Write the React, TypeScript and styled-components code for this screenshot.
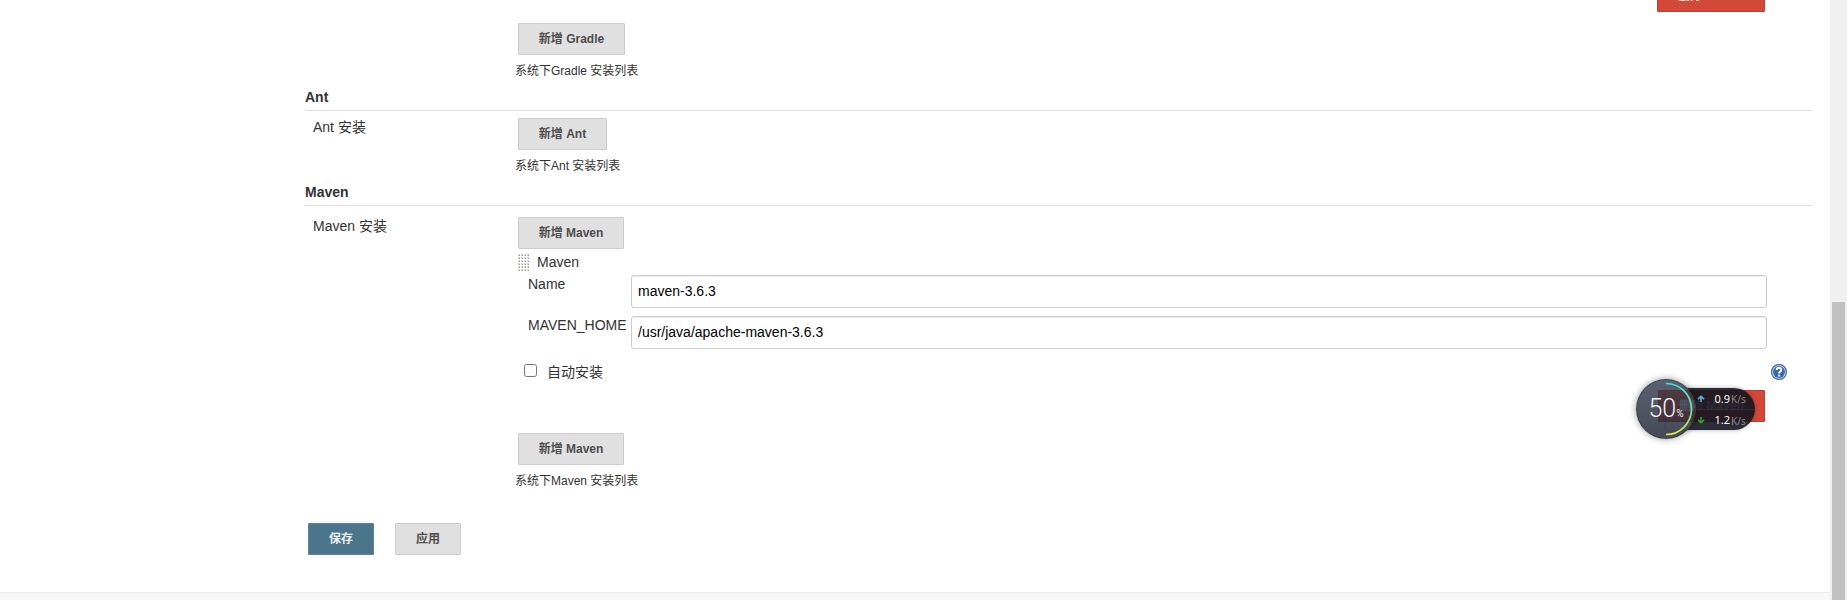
import React from "react";
import styled, { createGlobalStyle } from "styled-components";

const GlobalStyle = createGlobalStyle`
  * { box-sizing: border-box; }
  body {
    margin: 0;
    overflow: hidden;
    background: #fff;
    color: #333;
    font: 14px/20px "Liberation Sans", "Noto Sans CJK SC", sans-serif;
  }
`;

const Screen = styled.div`
  position: relative;
  display: flex;
  width: 1847px;
  height: 600px;
  overflow: hidden;
`;

const Page = styled.main`
  display: flex;
  flex-direction: column;
  width: 1830px;
  height: 600px;
`;

const Form = styled.form`
  display: flex;
  flex-direction: column;
  height: 592px;
  padding: 0 18px 0 305px;
`;

const Footer = styled.footer`
  height: 8px;
  border-top: 1px solid #e8eeee;
  background: #f7f7f7;
`;

const Track = styled.div`
  width: 17px;
  height: 600px;
  padding: 302px 2px 0;
  background: #f0f0f0;
`;

const Thumb = styled.div`
  height: 298px;
  background: #c1c1c1;
`;

const Section = styled.section<{ $height: number }>`
  display: flex;
  flex-direction: column;
  height: ${(p) => p.$height}px;
`;

const Heading = styled.h2`
  height: 24px;
  margin: 0;
  border-bottom: 1px solid #ddd;
  font-size: 14px;
  line-height: 20px;
  font-weight: bold;
`;

const Row = styled.div<{ $top?: number }>`
  display: flex;
  padding-top: ${(p) => p.$top ?? 0}px;
`;

const RowLabel = styled.div`
  width: 205px;
  margin-top: -1px;
  padding-left: 8px;
  line-height: 20px;
  white-space: nowrap;
`;

const Setting = styled.div`
  display: flex;
  flex-direction: column;
  align-items: flex-start;
  width: 1302px;
  padding-left: 8px;
`;

const Button = styled.button<{ $width: number; $tone?: "primary" | "danger" }>`
  flex: none;
  width: ${(p) => p.$width}px;
  height: 32px;
  padding: 0;
  border: 1px solid
    ${(p) => (p.$tone === "primary" ? "#5088a0" : p.$tone === "danger" ? "#c43c2c" : "#ccc")};
  border-radius: 1px;
  background: ${(p) =>
    p.$tone === "primary" ? "#4b758b" : p.$tone === "danger" ? "#d24939" : "#e0e0e0"};
  color: ${(p) => (p.$tone ? "#eee" : "#4d4d4d")};
  font: bold 12px/30px "Liberation Sans", "Noto Sans CJK SC", sans-serif;
  white-space: nowrap;
`;

const Hint = styled.div`
  height: 18px;
  margin: 7px 0 0 -3px;
  font-size: 12px;
  line-height: 18px;
  white-space: nowrap;
`;

const DeleteSlot = styled.div`
  display: flex;
  justify-content: flex-end;
  width: 1247px;
  height: 32px;
`;

const RemovedAbove = styled(DeleteSlot)`
  height: 12px;
  margin-bottom: 11px;
  align-items: flex-end;
`;

const ToolTitle = styled.div`
  display: flex;
  align-items: center;
  height: 26px;
  gap: 8px;
`;

const Grip = styled.svg`
  width: 11px;
  height: 17px;
  margin-top: 1px;
`;

const Field = styled.div`
  display: flex;
  height: 41px;
  padding-left: 10px;
`;

const FieldLabel = styled.label`
  width: 103px;
  line-height: 18px;
`;

const Input = styled.input`
  width: 1136px;
  height: 33px;
  padding: 0 6px 1px;
  border: 1px solid #ccc;
  border-radius: 3px;
  outline: 0;
  background: #fff;
  box-shadow: inset 0 1px 1px rgba(0, 0, 0, 0.075);
  color: #000;
  font: 14px/20px "Liberation Sans", sans-serif;
`;

const CheckRow = styled.div`
  display: flex;
  align-items: center;
  width: 1269px;
  height: 30px;
  margin-bottom: 3px;
  padding-left: 6px;
`;

const Checkbox = styled.input`
  width: 13px;
  height: 13px;
  margin: -3px 10px 0 0;
`;

const Help = styled.svg`
  width: 16px;
  height: 16px;
  margin-left: auto;
`;

const Actions = styled.div`
  display: flex;
  gap: 21px;
  padding: 0 3px;
`;

const Monitor = styled.div`
  position: absolute;
  left: 1636px;
  top: 379px;
  width: 119px;
  height: 60px;
`;

const Speeds = styled.div`
  position: absolute;
  left: 30px;
  top: 9px;
  display: flex;
  flex-direction: column;
  width: 89px;
  height: 42px;
  padding-left: 31px;
  border-radius: 0 21px 21px 0;
  background: radial-gradient(circle at 0 21px, transparent 29px, rgba(20, 22, 32, 0.9) 30px);
  box-shadow: 0 0 4px rgba(0, 0, 0, 0.3);
`;

const Speed = styled.div`
  display: flex;
  align-items: center;
  height: 21px;

  & + & {
    border-top: 1px solid rgba(90, 90, 105, 0.25);
  }
`;

const Arrow = styled.svg`
  width: 8px;
  height: 7px;
`;

const Rate = styled.span`
  width: 19px;
  margin-left: 6px;
  color: #fff;
  font: 11px/20px "Noto Sans", sans-serif;
  text-align: right;
  white-space: nowrap;
`;

const Unit = styled.span`
  margin: 1px 0 0 1px;
  color: #8d858e;
  font: 10px/18px "Noto Sans", sans-serif;
`;

const Dial = styled.div`
  position: absolute;
  left: 0;
  top: 0;
  display: flex;
  justify-content: center;
  align-items: center;
  width: 60px;
  height: 60px;
  border: 1px solid rgba(45, 50, 62, 0.6);
  border-radius: 50%;
  background: linear-gradient(rgba(49, 58, 74, 0.8), rgba(32, 37, 52, 0.83));
  box-shadow: 0 0 7px rgba(0, 0, 0, 0.4);
`;

const Arc = styled.svg`
  position: absolute;
  left: -1px;
  top: -1px;
  width: 60px;
  height: 60px;
`;

const Percent = styled.div`
  display: flex;
  align-items: baseline;
  margin-top: -1px;
  color: #f4f4f4;
  font: 300 25px/28px Roboto, sans-serif;
`;

const Sign = styled.span`
  font: 10px/12px Roboto, sans-serif;
`;

function SpeedLine({ up, value }: { up?: boolean; value: string }) {
  return (
    <Speed>
      <Arrow viewBox="0 0 9 8" fill="none" stroke={up ? "#58b4ee" : "#27a92b"} strokeWidth="1.8">
        <path d={up ? "M4.5 8V2M1 4.7L4.5 1.4L8 4.7" : "M4.5 0V6M1 3.3L4.5 6.6L8 3.3"} />
      </Arrow>
      <Rate>{value}</Rate>
      <Unit>K/s</Unit>
    </Speed>
  );
}

function GripDots() {
  return (
    <Grip viewBox="0 0 11 17" shapeRendering="crispEdges">
      <defs>
        <pattern id="dots" width="3" height="3" patternUnits="userSpaceOnUse">
          <rect width="2" height="2" fill="#d6d6d3" />
          <rect x="1" y="1" width="1" height="1" fill="#96968f" />
        </pattern>
      </defs>
      <rect width="11" height="17" fill="url(#dots)" />
    </Grip>
  );
}

function HelpIcon() {
  return (
    <Help viewBox="0 0 16 16">
      <circle cx="8" cy="8" r="7.4" fill="#e8eef6" stroke="#3a639e" strokeWidth="1.2" />
      <circle cx="8" cy="8" r="6" fill="#3a68a8" />
      <path
        d="M5.7 6.1C5.7 2.9 10.5 3.2 10.3 6C10.2 7.6 8.1 7.5 8.1 9.5M8.1 10.7V12.6"
        fill="none"
        stroke="#fff"
        strokeWidth="2"
      />
    </Help>
  );
}

export default function App() {
  return (
    <>
      <GlobalStyle />
      <Screen>
        <Page>
          <Form>
            <Section $height={87}>
              <Row>
                <RowLabel />
                <Setting>
                  <RemovedAbove>
                    <Button type="button" $width={108} $tone="danger">删除 Gradle</Button>
                  </RemovedAbove>
                  <Button type="button" $width={107}>新增 Gradle</Button>
                  <Hint>系统下Gradle 安装列表</Hint>
                </Setting>
              </Row>
            </Section>
            <Section $height={95}>
              <Heading>Ant</Heading>
              <Row $top={7}>
                <RowLabel>Ant 安装</RowLabel>
                <Setting>
                  <Button type="button" $width={89}>新增 Ant</Button>
                  <Hint>系统下Ant 安装列表</Hint>
                </Setting>
              </Row>
            </Section>
            <Section $height={341}>
              <Heading>Maven</Heading>
              <Row $top={11}>
                <RowLabel>Maven 安装</RowLabel>
                <Setting>
                  <Button type="button" $width={106}>新增 Maven</Button>
                  <ToolTitle><GripDots />Maven</ToolTitle>
                  <Field>
                    <FieldLabel htmlFor="tool-name">Name</FieldLabel>
                    <Input id="tool-name" defaultValue="maven-3.6.3" />
                  </Field>
                  <Field>
                    <FieldLabel htmlFor="tool-home">MAVEN_HOME</FieldLabel>
                    <Input id="tool-home" defaultValue="/usr/java/apache-maven-3.6.3" />
                  </Field>
                  <CheckRow>
                    <Checkbox type="checkbox" id="auto-install" />
                    <label htmlFor="auto-install">自动安装</label>
                    <HelpIcon />
                  </CheckRow>
                  <DeleteSlot>
                    <Button type="button" $width={107} $tone="danger">删除 Maven</Button>
                  </DeleteSlot>
                  <Row $top={11}>
                    <Button type="button" $width={106}>新增 Maven</Button>
                  </Row>
                  <Hint>系统下Maven 安装列表</Hint>
                </Setting>
              </Row>
            </Section>
            <Actions>
              <Button type="button" $width={66} $tone="primary">保存</Button>
              <Button type="button" $width={66}>应用</Button>
            </Actions>
          </Form>
          <Footer />
        </Page>
        <Track><Thumb /></Track>
        <Monitor>
          <Speeds>
            <SpeedLine up value="0.9" />
            <SpeedLine value="1.2" />
          </Speeds>
          <Dial>
            <Arc viewBox="0 0 60 60">
              <defs>
                <linearGradient id="load" x1="0" y1="0" x2="0" y2="1">
                  <stop offset="0" stopColor="#43e0e8" />
                  <stop offset="0.55" stopColor="#77e3a0" />
                  <stop offset="1" stopColor="#e5e83c" />
                </linearGradient>
              </defs>
              <path d="M30 4.5A25.5 25.5 0 0 1 30 55.5" fill="none" stroke="url(#load)" strokeWidth="1.7" />
            </Arc>
            <Percent>50<Sign>%</Sign></Percent>
          </Dial>
        </Monitor>
      </Screen>
    </>
  );
}
